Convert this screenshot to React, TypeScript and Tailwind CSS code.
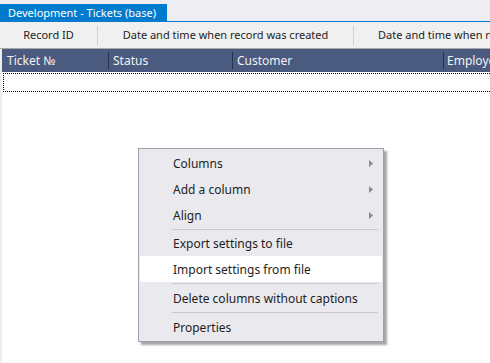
import React from 'react'

const menuItems: { label: string; sub?: boolean; hot?: boolean; sepAfter?: string }[] = [
  { label: 'Columns', sub: true },
  { label: 'Add a column', sub: true },
  { label: 'Align', sub: true, sepAfter: 'h-[2px]' },
  { label: 'Export settings to file' },
  { label: 'Import settings from file', hot: true, sepAfter: 'h-[3px]' },
  { label: 'Delete columns without captions', sepAfter: 'h-[3px]' },
  { label: 'Properties' },
]

const Arrow = () => (
  <svg width="4" height="7" viewBox="0 0 4 7" className="mr-[9px]">
    <path d="M0 0 L4 3.5 L0 7 Z" fill="#8a8a8a" />
  </svg>
)

const App = () => {
  return (
    <div
      className="relative w-[490px] h-[363px] overflow-hidden bg-[#eeeef2] text-[12px] text-[#1e1e1e] flex flex-col whitespace-nowrap"
      style={{ fontFamily: '"Noto Sans", "Segoe UI", sans-serif' }}
    >
      {/* tab strip */}
      <div className="h-[22px] shrink-0 pt-[4px] flex flex-col">
        <div className="h-[17px] w-[167px] shrink-0 bg-[#007acc] text-white text-[11px] flex items-center pl-[8px] leading-none">
          Development - Tickets (base)
        </div>
        <div className="h-[1px] shrink-0 bg-[#007acc]" />
      </div>

      {/* toolbar of column captions */}
      <div className="h-[27px] shrink-0 flex items-center border-b border-[#a8a8a8] bg-[#f0f0f0] text-[11px]">
        <div className="w-[97px] shrink-0 text-center">Record ID</div>
        <div className="w-[1px] h-[19px] shrink-0 bg-[#d0d0d0]" />
        <div className="w-[255px] shrink-0 text-center">Date and time when record was created</div>
        <div className="w-[1px] h-[19px] shrink-0 bg-[#d0d0d0]" />
        <div className="pl-[24px] shrink-0">Date and time when record was changed</div>
      </div>

      {/* grid */}
      <div className="pl-[2px] flex-1 flex flex-col">
        <div className="h-[23px] shrink-0 bg-[#4b5b7f] text-[#f2f2f2] flex items-center">
          <div className="w-[106px] shrink-0 pl-[5px]">Ticket №</div>
          <div className="w-[1px] h-[17px] shrink-0 bg-[#26324d]" />
          <div className="w-[123px] shrink-0 pl-[4px]">Status</div>
          <div className="w-[1px] h-[17px] shrink-0 bg-[#26324d]" />
          <div className="w-[210px] shrink-0 pl-[4px]">Customer</div>
          <div className="w-[1px] h-[17px] shrink-0 bg-[#26324d]" />
          <div className="pl-[3px] shrink-0">Employee</div>
        </div>
        <div className="flex-1 bg-white pt-[1px]">
          <div className="h-[19px] ml-[1px] border border-dotted border-black border-r-0" />
        </div>
      </div>

      {/* context menu */}
      <div className="absolute left-[138px] top-[148px] w-[246px] bg-[#e9e9ee] border border-[#a0a0ad] p-[1px] shadow-[3px_3px_2px_rgba(0,0,0,0.35)]">
        {menuItems.map((it) => (
          <React.Fragment key={it.label}>
            <div className={`h-[26px] flex items-center justify-between pl-[33px] pt-[1px] ${it.hot ? 'bg-white' : ''}`}>
              <span>{it.label}</span>
              {it.sub && <Arrow />}
            </div>
            {it.sepAfter && (
              <div className={`${it.sepAfter} flex items-center pl-[32px] pr-[4px]`}>
                <div className="h-[1px] w-full bg-[#c9c9d2]" />
              </div>
            )}
          </React.Fragment>
        ))}
      </div>
    </div>
  )
}

export default App
